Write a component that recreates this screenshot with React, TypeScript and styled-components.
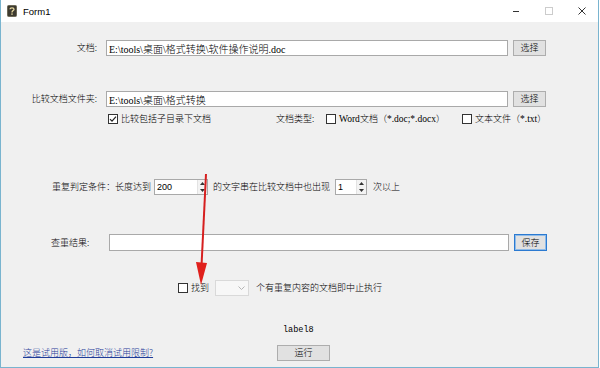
import React from "react";
import styled, { createGlobalStyle } from "styled-components";

const GlobalStyle = createGlobalStyle`
  html, body {
    margin: 0;
    padding: 0;
    background: #ffffff;
  }
  body {
    font-family: "Liberation Sans", "Noto Sans CJK SC", sans-serif;
    color: #000;
  }
`;

const CJK = `"Noto Sans CJK SC", "Noto Sans", sans-serif`;
const SERIF = `"Liberation Serif", "Noto Sans CJK SC", serif`;

const Window = styled.div`
  position: relative;
  width: 599px;
  height: 368px;
  box-sizing: border-box;
  border-left: 1px solid #79b4cf;
  border-right: 1px solid #79b4cf;
  border-bottom: 1px solid #79b4cf;
  display: flex;
  flex-direction: column;
  overflow: hidden;
`;

const TitleBar = styled.div`
  height: 22px;
  flex-shrink: 0;
  background: #ffffff;
  display: flex;
  align-items: center;
  padding-left: 6px;
`;

const TitleText = styled.span`
  margin-left: 6px;
  font-family: "Liberation Sans", sans-serif;
  font-size: 9.5px;
  color: #000;
`;

const WinControls = styled.div`
  margin-left: auto;
  display: flex;
  height: 100%;
`;

const CtrlButton = styled.div`
  width: 33px;
  height: 100%;
  display: flex;
  align-items: center;
  justify-content: center;
`;

const Body = styled.div`
  position: relative;
  flex: 1;
  background: #f0f0f0;
  display: flex;
  flex-direction: column;
`;

const Row = styled.div<{ $mt: number; $h: number; $pl?: number }>`
  display: flex;
  align-items: center;
  margin-top: ${({ $mt }) => $mt}px;
  height: ${({ $h }) => $h}px;
  padding-left: ${({ $pl }) => $pl ?? 0}px;
`;

const Label = styled.span<{ $w?: number; $right?: boolean; $ml?: number }>`
  font-family: ${CJK};
  font-size: 9px;
  font-weight: 300;
  line-height: 12px;
  white-space: nowrap;
  flex-shrink: 0;
  width: ${({ $w }) => ($w ? `${$w}px` : "auto")};
  margin-left: ${({ $ml }) => $ml ?? 0}px;
  text-align: ${({ $right }) => ($right ? "right" : "left")};
  box-sizing: border-box;
  padding-right: ${({ $right }) => ($right ? 3 : 0)}px;
`;

const SmallSerif = styled.span`
  font-family: ${SERIF};
  font-size: 9.5px;
  font-weight: 400;
`;

const TextBox = styled.input<{ $w: number; $ml: number; $h?: number }>`
  width: ${({ $w }) => $w}px;
  height: ${({ $h }) => $h ?? 16}px;
  margin: 0 0 0 ${({ $ml }) => $ml}px;
  box-sizing: border-box;
  border: 1px solid #a9a9a9;
  background: #ffffff;
  padding: 0 2px;
  font-family: ${SERIF};
  font-size: 10px;
  font-weight: 300;
  color: #000;
  outline: none;
`;

const Btn = styled.button<{ $w: number; $ml?: number; $focus?: boolean; $h?: number }>`
  width: ${({ $w }) => $w}px;
  height: ${({ $h }) => $h ?? 16}px;
  margin: 0 0 0 ${({ $ml }) => $ml ?? 0}px;
  padding: 0;
  box-sizing: border-box;
  background: #e1e1e1;
  border: 1px solid ${({ $focus }) => ($focus ? "#2b7ad1" : "#adadad")};
  box-shadow: ${({ $focus }) => ($focus ? "inset 0 0 0 1px #8fbbe8" : "none")};
  font-family: ${CJK};
  font-size: 9px;
  font-weight: 300;
  line-height: 12px;
  color: #000;
`;

const Box = styled.span<{ $ml?: number }>`
  width: 10px;
  height: 10px;
  margin-left: ${({ $ml }) => $ml ?? 0}px;
  box-sizing: border-box;
  border: 1px solid #333333;
  background: #ffffff;
  flex-shrink: 0;
  display: flex;
  align-items: center;
  justify-content: center;
`;

const CheckText = styled.span<{ $w?: number }>`
  margin-left: 3px;
  font-family: ${CJK};
  font-size: 9px;
  font-weight: 300;
  line-height: 12px;
  white-space: nowrap;
  width: ${({ $w }) => ($w ? `${$w}px` : "auto")};
  flex-shrink: 0;
`;

const Spin = styled.div<{ $w: number }>`
  width: ${({ $w }) => $w}px;
  height: 16px;
  box-sizing: border-box;
  border: 1px solid #a9a9a9;
  background: #ffffff;
  display: flex;
  flex-shrink: 0;
`;

const SpinValue = styled.span`
  flex: 1;
  padding-left: 2px;
  font-family: "Liberation Sans", sans-serif;
  font-size: 9px;
  line-height: 14px;
`;

const SpinArrows = styled.div`
  width: 9px;
  display: flex;
  flex-direction: column;
  border-left: 1px solid #e3e3e3;
`;

const SpinHalf = styled.div`
  flex: 1;
  display: flex;
  align-items: center;
  justify-content: center;
  background: #f3f3f3;
`;

const Combo = styled.div`
  width: 34px;
  height: 16px;
  margin-left: 6px;
  box-sizing: border-box;
  border: 1px solid #d9d9d9;
  background: #f7f7f7;
  display: flex;
  align-items: center;
  justify-content: flex-end;
  padding-right: 3px;
  flex-shrink: 0;
`;

const MonoLabel = styled.span`
  font-family: "Liberation Mono", monospace;
  font-size: 8.5px;
  line-height: 12px;
  color: #000;
`;

const TrialLink = styled.a`
  font-family: ${CJK};
  font-size: 9px;
  font-weight: 300;
  line-height: 12px;
  color: #1f3c99;
  text-decoration: underline;
  width: 254px;
  flex-shrink: 0;
  white-space: nowrap;
`;

const ArrowOverlay = styled.svg`
  position: absolute;
  left: 0;
  top: 0;
  pointer-events: none;
`;

const Check: React.FC<{ checked?: boolean; ml?: number }> = ({ checked, ml }) => (
  <Box $ml={ml}>
    {checked && (
      <svg width="8" height="8" viewBox="0 0 8 8">
        <path d="M1 4.2 L3 6.2 L7 1.6" fill="none" stroke="#222" strokeWidth="1.2" />
      </svg>
    )}
  </Box>
);

const SpinBox: React.FC<{ value: string; w: number }> = ({ value, w }) => (
  <Spin $w={w}>
    <SpinValue>{value}</SpinValue>
    <SpinArrows>
      <SpinHalf>
        <svg width="5" height="3" viewBox="0 0 5 3">
          <path d="M0 3 L2.5 0 L5 3 Z" fill="#333" />
        </svg>
      </SpinHalf>
      <SpinHalf>
        <svg width="5" height="3" viewBox="0 0 5 3">
          <path d="M0 0 L5 0 L2.5 3 Z" fill="#333" />
        </svg>
      </SpinHalf>
    </SpinArrows>
  </Spin>
);

const AppIcon = () => (
  <svg width="10" height="12" viewBox="0 0 10 12">
    <rect x="0.5" y="0.5" width="9" height="11" rx="1" fill="#3d3a30" stroke="#6e6a58" />
    <path d="M3 4.2 C3 2.4 7 2.4 7 4.2 C7 5.6 5 5.6 5 7.4" fill="none" stroke="#e8d9a0" strokeWidth="1.3" />
    <rect x="4.3" y="8.4" width="1.4" height="1.4" fill="#e8d9a0" />
  </svg>
);

export default function App() {
  return (
    <>
      <GlobalStyle />
      <Window>
        <TitleBar>
          <AppIcon />
          <TitleText>Form1</TitleText>
          <WinControls>
            <CtrlButton>
              <svg width="8" height="8" viewBox="0 0 8 8">
                <path d="M1 4.5 H7" stroke="#333" strokeWidth="1" />
              </svg>
            </CtrlButton>
            <CtrlButton>
              <svg width="8" height="8" viewBox="0 0 8 8">
                <rect x="0.5" y="0.5" width="7" height="7" fill="none" stroke="#cccccc" />
              </svg>
            </CtrlButton>
            <CtrlButton>
              <svg width="8" height="8" viewBox="0 0 8 8">
                <path d="M0.5 0.5 L7.5 7.5 M7.5 0.5 L0.5 7.5" stroke="#333" strokeWidth="1" />
              </svg>
            </CtrlButton>
          </WinControls>
        </TitleBar>

        <Body>
          <Row $mt={18} $h={16}>
            <Label $w={99} $right>
              文档:
            </Label>
            <TextBox $w={402} $ml={6} readOnly value="E:\tools\桌面\格式转换\软件操作说明.doc" />
            <Btn $w={33} $ml={5}>
              选择
            </Btn>
          </Row>

          <Row $mt={35} $h={16}>
            <Label $w={99} $right>
              比较文档文件夹:
            </Label>
            <TextBox $w={402} $ml={6} readOnly value="E:\tools\桌面\格式转换" />
            <Btn $w={33} $ml={5}>
              选择
            </Btn>
          </Row>

          <Row $mt={6} $h={12} $pl={107}>
            <Check checked />
            <CheckText $w={155}>比较包括子目录下文档</CheckText>
            <Label $w={50}>文档类型:</Label>
            <Check />
            <CheckText $w={123}>
              <SmallSerif>Word</SmallSerif>文档（<SmallSerif>*.doc;*.docx</SmallSerif>）
            </CheckText>
            <Check />
            <CheckText>
              文本文件（<SmallSerif>*.txt</SmallSerif>）
            </CheckText>
          </Row>

          <Row $mt={54} $h={16} $pl={51}>
            <Label $w={102}>重复判定条件：长度达到</Label>
            <SpinBox value="200" w={54} />
            <Label $w={122} $ml={5}>
              的文字串在比较文档中也出现
            </Label>
            <SpinBox value="1" w={32} />
            <Label $ml={6}>次以上</Label>
          </Row>

          <Row $mt={39} $h={17} $pl={50}>
            <Label $w={58}>查重结果:</Label>
            <TextBox $w={400} $ml={0} $h={17} readOnly value="" />
            <Btn $w={33} $ml={5} $h={17} $focus>
              保存
            </Btn>
          </Row>

          <Row $mt={29} $h={16} $pl={177}>
            <Check />
            <CheckText>找到</CheckText>
            <Combo>
              <svg width="7" height="4" viewBox="0 0 7 4">
                <path d="M0.5 0.5 L3.5 3.5 L6.5 0.5" fill="none" stroke="#b5b5b5" strokeWidth="1" />
              </svg>
            </Combo>
            <Label $ml={7}>个有重复内容的文档即中止执行</Label>
          </Row>

          <Row $mt={28} $h={12} $pl={282}>
            <MonoLabel>label8</MonoLabel>
          </Row>

          <Row $mt={9} $h={16} $pl={22}>
            <TrialLink href="#">这是试用版，如何取消试用限制?</TrialLink>
            <Btn $w={53}>运行</Btn>
          </Row>
        </Body>

        <ArrowOverlay width="600" height="368" viewBox="0 0 600 368">
          <path d="M205 174 L200.5 266" stroke="#d61f1f" strokeWidth="2" fill="none" />
          <path d="M195 262 L206 263 L200 285 Z" fill="#e0201c" />
        </ArrowOverlay>
      </Window>
    </>
  );
}
